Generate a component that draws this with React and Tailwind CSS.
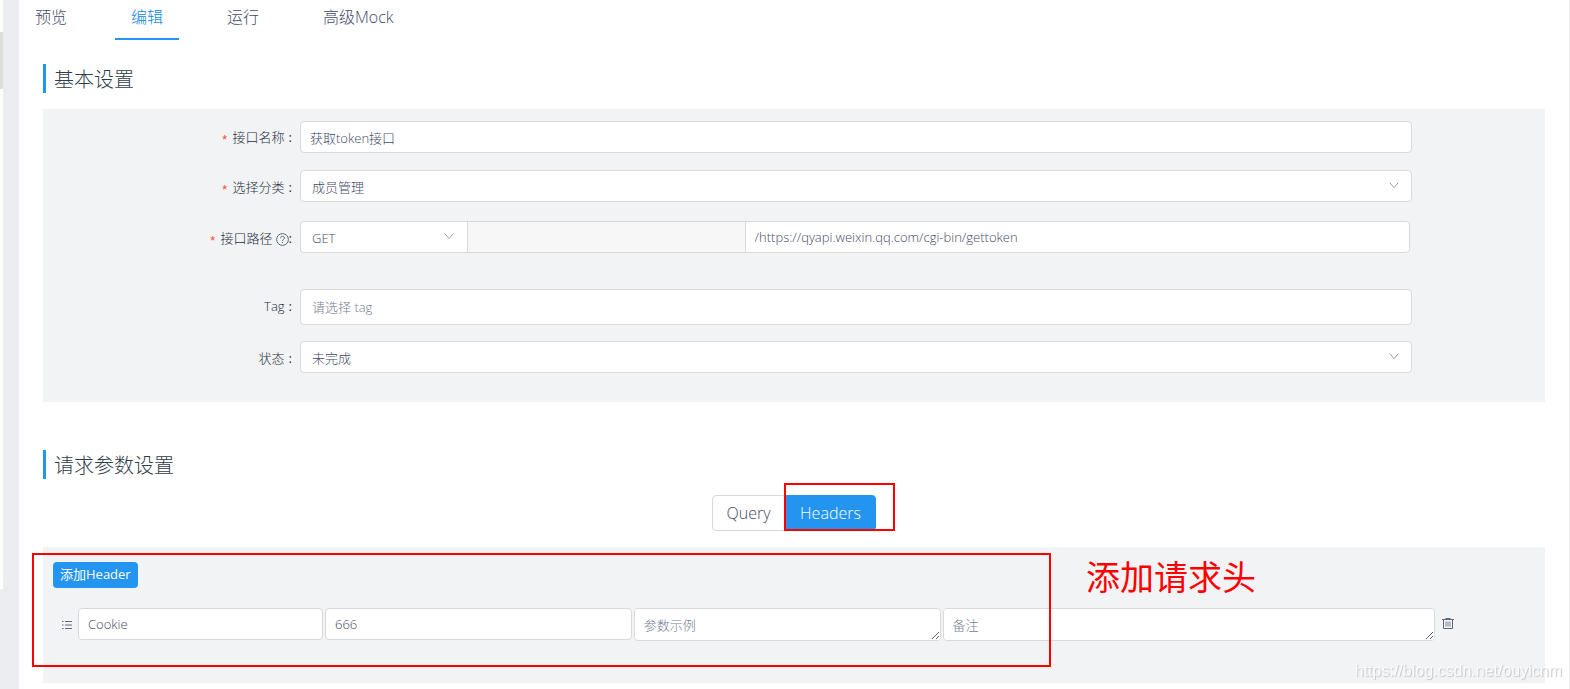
import { useState } from "react";

const tabs = ["预览", "编辑", "运行", "高级Mock"];

const boxClass =
  "block w-full text-[13px] text-[#3f4a69] bg-white border border-[#d9d9d9] rounded-sm outline-none placeholder:text-[#747d92]";

const fieldClass = `${boxClass} h-8 px-[9px]`;

const areaClass = `${boxClass} h-[33px] px-[9px] py-1.5 leading-5 resize`;

function Title({ children }) {
  return (
    <h2 className="h-[29px] border-l-[3px] border-[#2395f1] pl-2 text-xl leading-[31px] text-[#2f3c4a]">
      {children}
    </h2>
  );
}

function Select({ id, name, value, options, className }) {
  return (
    <div className="relative">
      <select
        id={id}
        aria-label={name}
        defaultValue={value}
        className={`block w-full h-8 pl-[11px] pr-8 pt-1 text-[13px] text-[#3f4a69] bg-white border border-[#d9d9d9] outline-none appearance-none ${className}`}
      >
        {options.map((o) => (
          <option key={o}>{o}</option>
        ))}
      </select>
      <svg
        viewBox="0 0 10 7"
        className="absolute right-[13px] top-3 w-2.5 h-[7px] pointer-events-none"
        fill="none"
        stroke="#97a0af"
      >
        <path d="M0.7 0.6 L5 5.6 L9.3 0.6" />
      </svg>
    </div>
  );
}

function FormRow({ id, label, required, help, low, className, children }) {
  return (
    <div className={`flex ${className}`}>
      <label
        htmlFor={id}
        className={`w-1/6 h-8 pr-2 flex items-center justify-end text-[13px] text-[#24313f] ${low ? "pt-1" : "pt-px"}`}
      >
        {required && (
          <span className="mr-1 pt-1.5 font-['Liberation_Mono'] text-[13px] font-normal text-[#f5501d]">
            *
          </span>
        )}
        {label}
        {help && (
          <svg
            viewBox="0 0 13 13"
            className="ml-[3px] w-[13px] h-[13px]"
            fill="none"
            stroke="#596672"
          >
            <circle cx="6.5" cy="6.5" r="5.9" />
            <path d="M4.6 5.2 C4.6 2.6 8.4 2.7 8.4 5 C8.4 6.4 6.5 6.3 6.5 7.9" />
            <path d="M6.5 9 V10.1" />
          </svg>
        )}
        <span className={help ? "font-normal" : "ml-1 font-normal"}>:</span>
      </label>
      <div className="w-3/4">{children}</div>
    </div>
  );
}

function HeaderRow() {
  return (
    <div className="flex items-start mt-5">
      <svg
        viewBox="0 0 10 10"
        className="w-2.5 h-2.5 ml-[9px] mr-[5px] mt-3 shrink-0"
        fill="none"
        stroke="#5f6881"
      >
        <path d="M0 1.5 H1.5 M3 1.5 H10 M0 5 H1.5 M3 5 H10 M0 8.5 H1.5 M3 8.5 H10" />
      </svg>
      <div className="w-1/6 px-px">
        <input aria-label="name" defaultValue="Cookie" className={fieldClass} />
      </div>
      <div className="w-5/24 px-px">
        <input aria-label="value" defaultValue="666" className={fieldClass} />
      </div>
      <div className="w-5/24 px-px">
        <textarea
          aria-label="example"
          placeholder="参数示例"
          rows={1}
          className={areaClass}
        />
      </div>
      <div className="w-1/3 px-px">
        <textarea
          aria-label="desc"
          placeholder="备注"
          rows={1}
          className={areaClass}
        />
      </div>
      <button aria-label="delete" className="ml-1.5 mt-[9px] shrink-0">
        <svg
          viewBox="0 0 12 12"
          className="w-3 h-3"
          fill="none"
          stroke="#5f6881"
        >
          <path d="M0 2.5 H12 M3.5 1.5 H8.5" />
          <path d="M1.5 2.5 V11.5 H10.5 V2.5" />
          <path d="M4 4.5 V9.5 M6 4.5 V9.5 M8 4.5 V9.5" strokeWidth="0.8" />
        </svg>
      </button>
    </div>
  );
}

function App() {
  const [tab, setTab] = useState("编辑");
  const [reqType, setReqType] = useState("Headers");

  return (
    <div className="relative flex min-h-screen bg-[#ecedf1] font-light font-['Open_Sans','Noto_Sans_CJK_SC',sans-serif]">
      {/* SIDEBAR EDGE */}
      <div className="w-[3px] h-[589px] pt-8 bg-white shrink-0">
        <div className="h-[57px] bg-[#dddddd]" />
      </div>

      <main className="flex-1 ml-4 pb-1.5 bg-white border-r border-[#ebebeb]">
        {/* TABS */}
        <nav className="flex gap-8 h-10 text-base">
          {tabs.map((t) => (
            <button
              key={t}
              onClick={() => setTab(t)}
              className={`h-10 px-4 pb-1 border-b-2 ${
                t === tab
                  ? "text-[#0c86ea] border-[#2395f1]"
                  : "text-[#3f4a69] border-transparent"
              }`}
            >
              {t}
            </button>
          ))}
        </nav>

        <div className="px-6 pt-6">
          {/* BASIC SETTINGS */}
          <Title>基本设置</Title>
          <div className="mt-4 px-2.5 pt-3 pb-[29px] bg-[#f2f3f5]">
            <FormRow id="title" label="接口名称" required className="mb-[17px]">
              <input
                id="title"
                defaultValue="获取token接口"
                className={fieldClass}
              />
            </FormRow>
            <FormRow
              id="cat"
              label="选择分类"
              required
              low
              className="mb-[19px]"
            >
              <Select
                id="cat"
                value="成员管理"
                options={["成员管理"]}
                className="rounded-sm"
              />
            </FormRow>
            <FormRow
              id="path"
              label="接口路径"
              required
              help
              low
              className="mb-9"
            >
              <div className="flex">
                <div className="w-[15%]">
                  <Select
                    name="method"
                    value="GET"
                    options={["GET", "POST", "PUT", "DELETE"]}
                    className="rounded-l-sm border-r-0"
                  />
                </div>
                <input
                  aria-label="basepath"
                  disabled
                  className="w-1/4 h-8 bg-[#f7f7f7] border border-r-0 border-[#d9d9d9]"
                />
                <div className="w-3/5 pr-px">
                  <input
                    id="path"
                    defaultValue="/https://qyapi.weixin.qq.com/cgi-bin/gettoken"
                    className={`${fieldClass} rounded-l-none`}
                  />
                </div>
              </div>
            </FormRow>
            <FormRow id="tag" label="Tag" low className="mb-4">
              <input
                id="tag"
                placeholder="请选择 tag"
                className={`${boxClass} h-9 px-[11px]`}
              />
            </FormRow>
            <FormRow id="status" label="状态" low className="">
              <Select
                id="status"
                value="未完成"
                options={["未完成", "已完成"]}
                className="rounded-sm"
              />
            </FormRow>
          </div>

          {/* REQUEST PARAMS */}
          <div className="mt-12">
            <Title>请求参数设置</Title>
          </div>
          <div className="flex justify-center mt-4">
            <div className="relative flex text-base text-center">
              {["Query", "Headers"].map((t) => (
                <label
                  key={t}
                  className={`h-9 border leading-[35px] cursor-pointer first:w-[73px] first:rounded-l-sm nth-2:w-[91px] nth-2:rounded-r-sm ${
                    t === reqType
                      ? "bg-[#2395f1] border-[#2395f1] text-white"
                      : "bg-white border-[#d9d9d9] text-[#3f4a69]"
                  }`}
                >
                  <input
                    type="radio"
                    name="reqType"
                    checked={t === reqType}
                    onChange={() => setReqType(t)}
                    className="sr-only"
                  />
                  {t}
                </label>
              ))}
              <div className="absolute -right-[19px] -top-3 w-[111px] h-12 border-2 border-[#fe0000] pointer-events-none" />
            </div>
          </div>

          <div className="relative mt-4 px-2.5 pt-[15px] pb-[42px] bg-[#f2f3f5]">
            <button className="block h-[26px] px-[7px] rounded-sm bg-[#2395f1] text-[13px] font-normal text-white">
              添加Header
            </button>
            <HeaderRow />
            <div className="absolute -left-[11px] top-1.5 w-[1019px] h-[114px] border-2 border-[#fe0000] pointer-events-none" />
            <p className="absolute left-[1043px] top-1.5 text-[34px] leading-[48px] font-normal text-[#fe0000]">
              添加请求头
            </p>
          </div>
        </div>
      </main>

      {/* WATERMARK */}
      <span className="absolute right-2 bottom-1.5 text-base font-['Liberation_Sans'] text-white/80 [text-shadow:1px_1px_1px_#c4c5c8]">
        https://blog.csdn.net/ouyicnm
      </span>
    </div>
  );
}

export default App;
